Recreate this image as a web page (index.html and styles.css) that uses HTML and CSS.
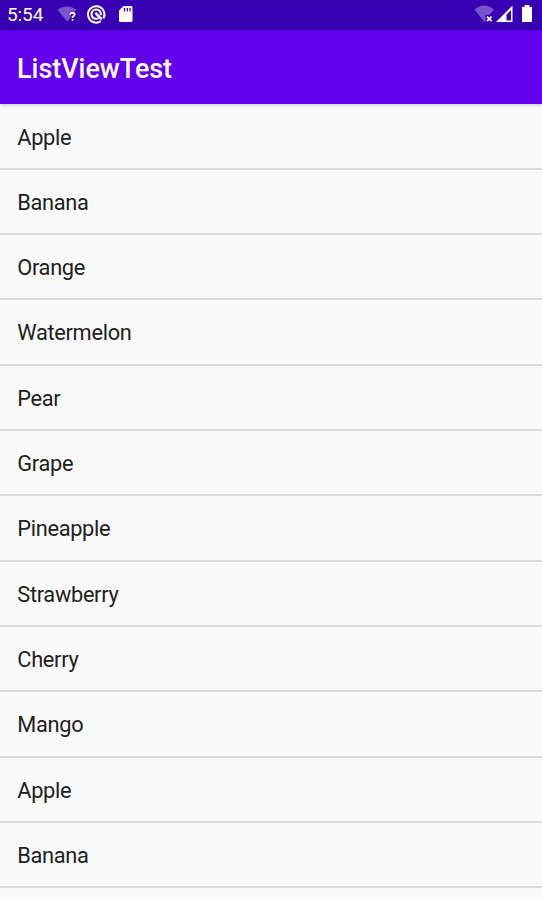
FILE: index.html
```html
<!DOCTYPE html>
<html lang="en">
<head>
<meta charset="utf-8">
<title>ListViewTest</title>
<link rel="stylesheet" href="styles.css">
</head>
<body>
<header class="status">
  <span class="clock">5:54</span>
  <svg class="icons" width="84" height="30" viewBox="0 0 84 30">
    <path class="dim" d="M0.500 9.800Q10 3 19.500 9.800L18 11.600Q12.500 10.500 12.300 14.500H13.500V18L10.200 21.500Z"/>
    <path class="line" d="M13.200 14.800Q13.300 12.600 15.500 12.600Q17.700 12.800 17.700 14.600Q17.500 15.700 15.600 16.800V18M15.600 19V20.700"/>
    <path class="ring" d="M43.800 21.200A8.200 8.200 0 1 1 46.500 18.200"/>
    <path class="ring" d="M41.500 18.200A4.700 4.700 0 1 1 43.700 15.300"/>
    <path class="ring wide" d="M38.300 12.800L44.800 19.300"/>
    <path class="fill" d="M66.500 6H74Q75.500 6 75.500 7.500V20.500Q75.500 22 74 22H63.500Q62 22 62 20.500V10.500Z"/>
    <path class="slot" d="M67.500 8V11.500M70.300 8V11.500M73 8V11.500"/>
  </svg>
  <svg class="icons right" width="68" height="30" viewBox="0 0 68 30">
    <path class="dim" d="M0.500 9.500Q10 1.500 20 9.500L15.500 14.800H11.500V21L10.500 22Z"/>
    <path class="line" d="M13 16.700L17.500 21.200M17.500 16.700L13 21.200"/>
    <path class="fill" fill-rule="evenodd" d="M38.500 5.500V22H22ZM37 10V20.500H32.500V14.500Z"/>
    <path class="fill" d="M50.500 5H55.500V7H58V22H48V7H50.500Z"/>
  </svg>
</header>
<h1 class="toolbar">ListViewTest</h1>
<ul class="list">
  <li>Apple</li><li>Banana</li><li>Orange</li><li>Watermelon</li>
  <li>Pear</li><li>Grape</li><li>Pineapple</li><li>Strawberry</li>
  <li>Cherry</li><li>Mango</li><li>Apple</li><li>Banana</li>
</ul>
</body>
</html>
```
FILE: styles.css
```css
body { margin: 0; height: 899px; overflow: hidden; background: #fafafa; font-family: Roboto, sans-serif; }
.status { display: flex; height: 30px; background: #3700b3; color: #fff; }
.clock { width: 50px; padding-left: 7px; font-size: 19px; letter-spacing: -.1px; line-height: 30px; }
.icons { display: block; }
.right { margin-left: auto; }
.fill { fill: #fff; }
.dim { fill: #7954cb; }
.line { fill: none; stroke: #fff; stroke-width: 1.7; }
.ring { fill: none; stroke: #fff; stroke-width: 2; }
.wide { stroke-width: 2.6; }
.slot { stroke: #3700b3; stroke-width: 1.3; }
.toolbar { margin: 0; height: 74px; padding-left: 17px; background: #6200ee; color: #fff; font-size: 26.900px; font-weight: 500; line-height: 78px; box-shadow: 0 1px 4px rgba(0, 0, 0, .22); }
.list { margin: 0; padding: .5px 0 0; list-style: none; }
.list li { box-sizing: border-box; height: 65.320px; padding-left: 17.300px; border-bottom: 2px solid #dadada; color: #212121; font-size: 21.800px; letter-spacing: -.32px; line-height: 65.300px; }
```
